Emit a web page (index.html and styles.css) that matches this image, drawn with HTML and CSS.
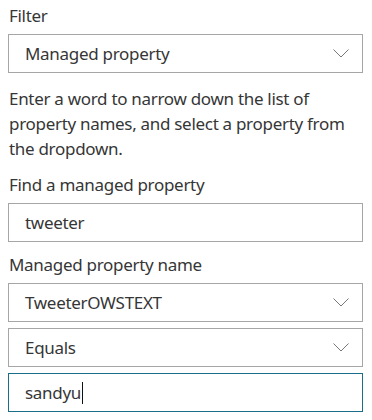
FILE: index.html
```html
<!DOCTYPE html>
<html lang="en">
<head>
<meta charset="UTF-8" />
<title>Filter</title>
<link rel="stylesheet" href="styles.css">
</head>
<body>

<div class="panel">
  <div class="label first">Filter</div>
  <div class="field dropdown">
    <span class="value">Managed property</span>
    <svg class="chevron" width="16" height="9" viewBox="0 0 16 9"><path d="M0.5 0.5 L8 8 L15.5 0.5" fill="none" stroke="#777" stroke-width="1"/></svg>
  </div>

  <p class="help">Enter a word to narrow down the list of property names, and select a property from the dropdown.</p>

  <div class="label after-help">Find a managed property</div>
  <div class="field">
    <span class="value">tweeter</span>
  </div>

  <div class="label">Managed property name</div>
  <div class="stack">
    <div class="field dropdown">
      <span class="value">TweeterOWSTEXT</span>
      <svg class="chevron" width="16" height="9" viewBox="0 0 16 9"><path d="M0.5 0.5 L8 8 L15.5 0.5" fill="none" stroke="#777" stroke-width="1"/></svg>
    </div>
    <div class="field dropdown">
      <span class="value">Equals</span>
      <svg class="chevron" width="16" height="9" viewBox="0 0 16 9"><path d="M0.5 0.5 L8 8 L15.5 0.5" fill="none" stroke="#777" stroke-width="1"/></svg>
    </div>
    <div class="field focused">
      <span class="value">sandyu</span><span class="caret"></span>
    </div>
  </div>
</div>

</body>
</html>
```

FILE: styles.css
```css
/* Base */
body {
  margin: 0;
  background: #fff;
  color: #363636;
  font-family: "Noto Sans", "Open Sans", sans-serif;
  font-size: 17px;
  letter-spacing: -0.3px;
}

.panel {
  width: 355px;
  padding: 3px 0 0 8px;
}

/* Labels & text */
.label {
  line-height: 25px;
  margin: 10px 0 6px 1px;
}
.label.first {
  margin-top: 0;
}
.label.after-help {
  margin-top: 11px;
}
.help {
  margin: 13px 0 0 1px;
  line-height: 25px;
}

/* Fields */
.field {
  display: flex;
  align-items: center;
  height: 37px;
  border: 1px solid #a6a6a6;
  padding: 0 13px 0 16px;
}
.field .value {
  line-height: 37px;
}
.dropdown {
  justify-content: space-between;
}
.chevron {
  display: block;
}
.focused {
  border-color: #1b6e8a;
}
.caret {
  display: inline-block;
  width: 1px;
  height: 22px;
  background: #111;
  margin-left: 1px;
}

.stack {
  display: flex;
  flex-direction: column;
  gap: 6px;
}
```
